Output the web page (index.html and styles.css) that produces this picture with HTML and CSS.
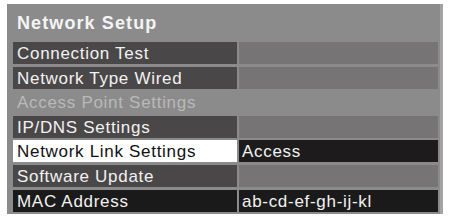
FILE: index.html
```html
<!DOCTYPE html>
<html lang="en">
<head>
    <meta charset="UTF-8">
    <title>Network Setup</title>
    <link rel="stylesheet" href="styles.css">
</head>
<body>
    <div class="panel">
        <h1>Network Setup</h1>
        <ul class="menu">
            <li class="row"><span class="label">Connection Test</span><span class="value"></span></li>
            <li class="row"><span class="label">Network Type Wired</span><span class="value"></span></li>
            <li class="row disabled"><span class="label">Access Point Settings</span><span class="value"></span></li>
            <li class="row"><span class="label">IP/DNS Settings</span><span class="value"></span></li>
            <li class="row selected"><span class="label">Network Link Settings</span><span class="value">Access</span></li>
            <li class="row"><span class="label">Software Update</span><span class="value"></span></li>
            <li class="row info"><span class="label">MAC Address</span><span class="value">ab-cd-ef-gh-ij-kl</span></li>
        </ul>
    </div>
</body>
</html>
```

FILE: styles.css
```css
body {
    margin: 0;
    padding: 4px 3px 4px 7px;
    background: #ffffff;
    font-family: "Liberation Sans", Arial, sans-serif;
}
.panel {
    width: 436px;
    height: 210px;
    box-sizing: border-box;
    background: #8b8b8b;
    border-right: 3px solid #a3a3a3;
    padding: 0 2px 0 6px;
}
h1 {
    margin: 0;
    height: 38px;
    font-size: 18px;
    font-weight: bold;
    letter-spacing: 1.1px;
    color: #f4f4f4;
    padding: 9px 0 0 4px;
    box-sizing: border-box;
}
.menu {
    list-style: none;
    margin: 0;
    padding: 0;
    display: flex;
    flex-direction: column;
    gap: 2.6px;
}
.row {
    display: flex;
    height: 22px;
    gap: 2px;
    font-size: 17px;
    letter-spacing: 0.7px;
    line-height: 23px;
    color: #f2f2f2;
}
.label {
    width: 224px;
    padding-left: 4px;
    box-sizing: border-box;
    background: #4a4748;
    white-space: nowrap;
}
.value {
    flex: 1;
    padding-left: 3px;
    background: #777475;
}
.disabled .label {
    background: #8b8b8b;
    color: #b9b9b9;
}
.disabled .value {
    background: #8b8b8b;
}
.selected .label {
    background: #ffffff;
    color: #111111;
}
.selected .value {
    background: #1d1b1c;
}
.info .label,
.info .value {
    background: #1b1a1a;
}
```
